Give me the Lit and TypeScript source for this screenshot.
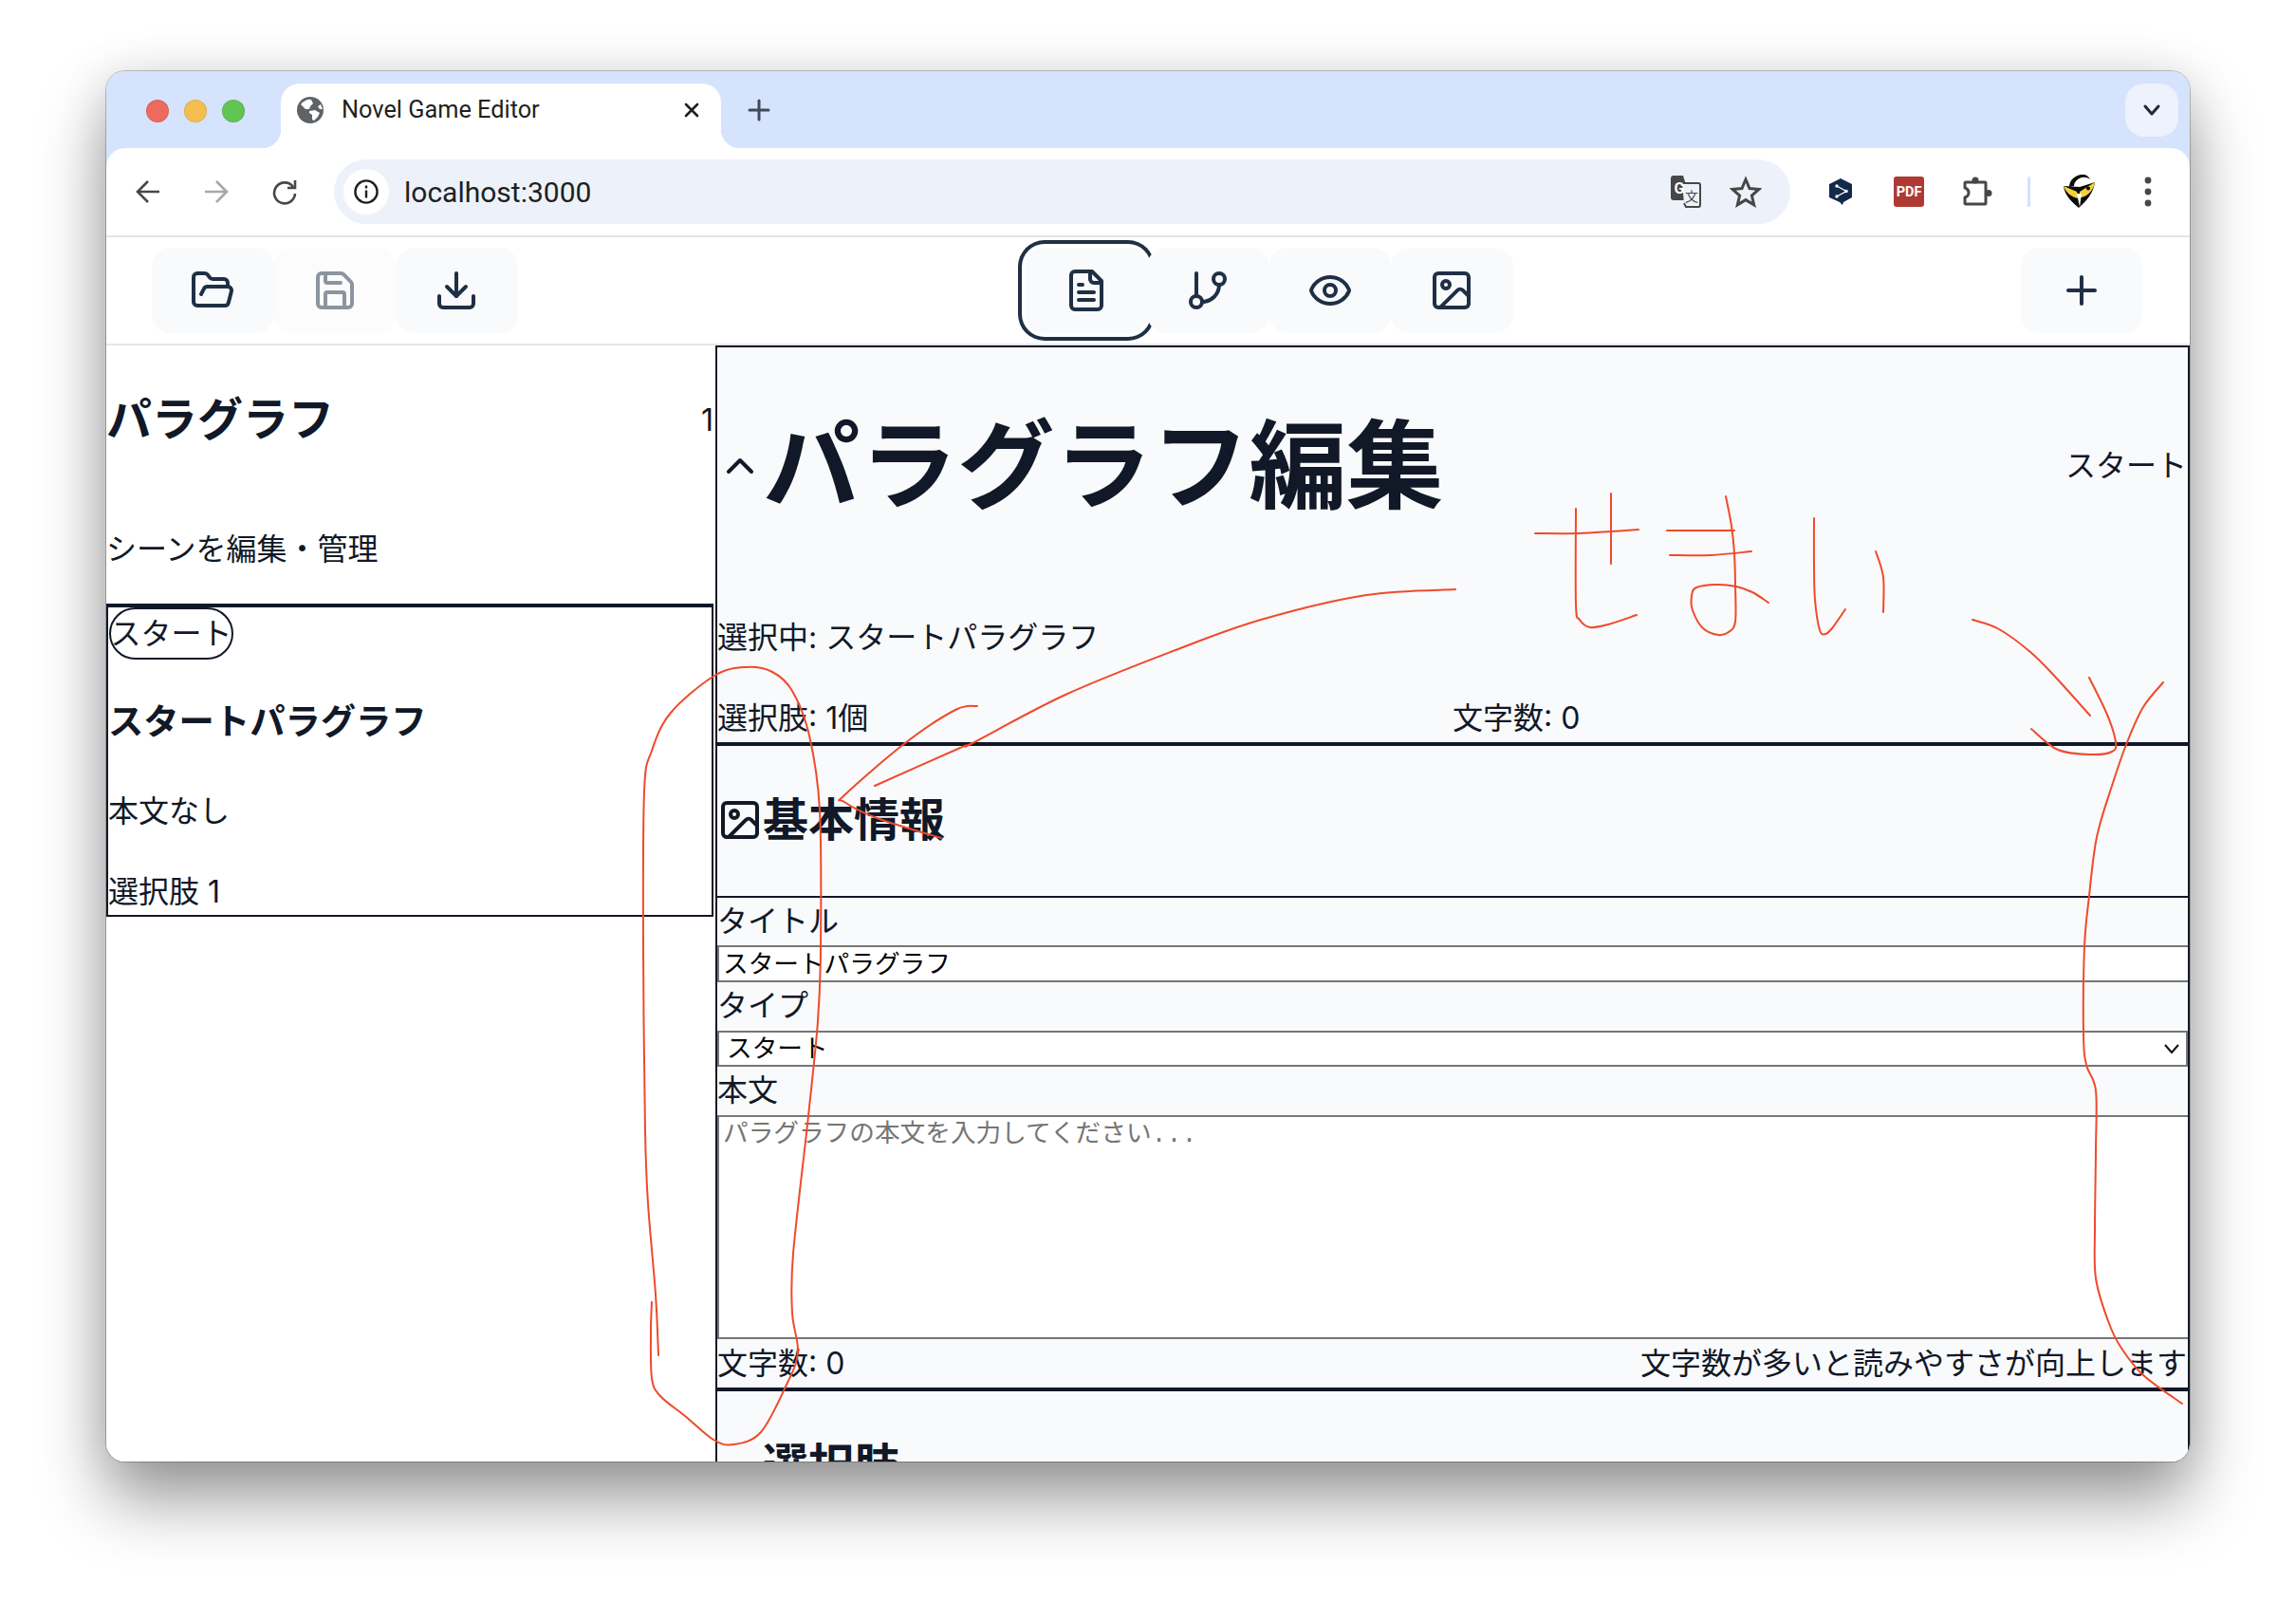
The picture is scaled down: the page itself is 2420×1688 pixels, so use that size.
// app.ts
// Novel game editor inside a browser window, with a red pen annotation on top

import { LitElement, html, css, svg } from "lit";
import { customElement } from "lit/decorators.js";

const icon = (body: unknown, cls = "") => html`
  <svg class="icon ${cls}" viewBox="0 0 24 24" fill="none" stroke="currentColor" stroke-width="2" stroke-linecap="round" stroke-linejoin="round">${body}</svg>
`;

const folderOpen = svg`<path d="m6 14 1.5-2.9A2 2 0 0 1 9.24 10H20a2 2 0 0 1 1.94 2.5l-1.54 6a2 2 0 0 1-1.95 1.5H4a2 2 0 0 1-2-2V5a2 2 0 0 1 2-2h3.9a2 2 0 0 1 1.69.9l.81 1.2a2 2 0 0 0 1.67.9H18a2 2 0 0 1 2 2v2"/>`;
const save = svg`<path d="M15.2 3a2 2 0 0 1 1.4.6l3.8 3.8a2 2 0 0 1 .6 1.4V19a2 2 0 0 1-2 2H5a2 2 0 0 1-2-2V5a2 2 0 0 1 2-2z"/><path d="M17 21v-7a1 1 0 0 0-1-1H8a1 1 0 0 0-1 1v7"/><path d="M7 3v4a1 1 0 0 0 1 1h7"/>`;
const download = svg`<path d="M21 15v4a2 2 0 0 1-2 2H5a2 2 0 0 1-2-2v-4"/><polyline points="7 10 12 15 17 10"/><line x1="12" y1="15" x2="12" y2="3"/>`;
const fileText = svg`<path d="M15 2H6a2 2 0 0 0-2 2v16a2 2 0 0 0 2 2h12a2 2 0 0 0 2-2V7Z"/><path d="M14 2v4a2 2 0 0 0 2 2h4"/><path d="M10 9H8"/><path d="M16 13H8"/><path d="M16 17H8"/>`;
const branch = svg`<line x1="6" y1="3" x2="6" y2="15"/><circle cx="18" cy="6" r="3"/><circle cx="6" cy="18" r="3"/><path d="M18 9a9 9 0 0 1-9 9"/>`;
const eye = svg`<path d="M2.062 12.348a1 1 0 0 1 0-.696 10.75 10.75 0 0 1 19.876 0 1 1 0 0 1 0 .696 10.75 10.75 0 0 1-19.876 0"/><circle cx="12" cy="12" r="3"/>`;
const image = svg`<rect x="3" y="3" width="18" height="18" rx="2"/><circle cx="9" cy="9" r="2"/><path d="m21 15-3.086-3.086a2 2 0 0 0-2.828 0L6 21"/>`;
const plus = svg`<path d="M5 12h14"/><path d="M12 5v14"/>`;
const chevronUp = svg`<path d="m18 15-6-6-6 6"/>`;

// pen strokes in page coordinates, read off the reference
const strokes: number[][][] = [
  [[1534, 621], [1440, 627], [1329, 653], [1239, 685], [1123, 732], [1025, 783], [1012, 788], [922, 828]],
  [[1030, 744], [1007, 748], [954, 783], [891, 837], [890, 845], [927, 863], [992, 883]],
  [[1618, 562], [1663, 562], [1698, 560], [1727, 558]],
  [[1698, 520], [1698, 594]],
  [[1661, 536], [1661, 637], [1665, 653], [1676, 661], [1695, 658], [1725, 648]],
  [[1757, 559], [1828, 559]],
  [[1760, 585], [1803, 585], [1846, 581]],
  [[1819, 523], [1825, 554], [1828, 583], [1829, 616], [1829, 655], [1822, 666], [1811, 669], [1795, 662], [1784, 643], [1783, 628], [1788, 619], [1809, 616], [1830, 618], [1847, 624], [1864, 635]],
  [[1912, 546], [1912, 595], [1913, 632], [1918, 664], [1924, 668], [1931, 662], [1945, 642]],
  [[1977, 581], [1985, 608], [1985, 645]],
  [[2079, 653], [2107, 663], [2140, 687], [2167, 714], [2203, 754]],
  [[2202, 714], [2221, 753], [2230, 782], [2226, 792], [2204, 795], [2169, 790], [2141, 768]],
  [[2280, 719], [2259, 745], [2242, 782], [2226, 828], [2210, 882], [2202, 944], [2197, 998], [2196, 1089], [2199, 1122], [2209, 1149], [2209, 1212], [2208, 1295], [2209, 1347], [2222, 1392], [2235, 1419], [2259, 1449], [2300, 1479]],
  [[694, 1428], [691, 1364], [683, 1268], [680, 1191], [678, 1000], [679, 834], [687, 791], [707, 751], [753, 712], [786, 703], [814, 708], [835, 728], [853, 775], [864, 854], [865, 1000], [862, 1076], [852, 1176], [836, 1321], [835, 1383], [841, 1425], [829, 1459], [802, 1509], [773, 1522], [752, 1517], [722, 1492], [696, 1471], [687, 1452], [686, 1402], [687, 1372]],
];

// catmull-rom through the points, so the pen lines stay round
function smooth(p: number[][]): string {
  let d = `M${p[0][0]} ${p[0][1]}`;
  for (let i = 0; i < p.length - 1; i++) {
    const a = p[Math.max(i - 1, 0)];
    const b = p[i];
    const c = p[i + 1];
    const e = p[Math.min(i + 2, p.length - 1)];
    d += `C${b[0] + (c[0] - a[0]) / 6} ${b[1] + (c[1] - a[1]) / 6} ${c[0] - (e[0] - b[0]) / 6} ${c[1] - (e[1] - b[1]) / 6} ${c[0]} ${c[1]}`;
  }
  return d;
}

@customElement("app-root")
export class AppRoot extends LitElement {
  static styles = css`
    :host {
      display: block;
      position: relative;
      width: 2420px;
      height: 1688px;
      padding: 75px 112px 148px;
      box-sizing: border-box;
      background: #fff;
      font-family: Inter, "Noto Sans CJK JP", sans-serif;
      font-size: 32px;
      line-height: 48px;
      color: #111827;
    }
    .window {
      display: flex;
      flex-direction: column;
      height: 100%;
      border-radius: 20px;
      overflow: hidden;
      background: #d5e3fc;
    }
    .shadow {
      height: 100%;
      border-radius: 20px;
      box-shadow: 0 0 0 1px rgba(0, 0, 0, 0.22), 0 40px 70px rgba(0, 0, 0, 0.4), 0 0 50px rgba(0, 0, 0, 0.1);
    }

    /* tab strip */
    .strip {
      display: flex;
      height: 81px;
      flex: none;
    }
    .lights {
      display: flex;
      gap: 16px;
      padding: 30px 0 0 42px;
      margin-right: 38px;
    }
    .lights i {
      width: 24px;
      height: 24px;
      border-radius: 50%;
      box-sizing: border-box;
      border: 1px solid rgba(0, 0, 0, 0.08);
    }
    .tab {
      position: relative;
      display: flex;
      align-items: center;
      width: 464px;
      height: 68px;
      margin-top: 13px;
      padding: 0 21px 12px 17px;
      box-sizing: border-box;
      background: #fff;
      border-radius: 20px 20px 0 0;
      font-family: Roboto, sans-serif;
      font-size: 25.3px;
      color: #1f1f1f;
    }
    .tab::before,
    .tab::after {
      content: "";
      position: absolute;
      bottom: 0;
      width: 20px;
      height: 20px;
    }
    .tab::before {
      left: -20px;
      background: radial-gradient(circle at 0 0, transparent 20px, #fff 20.5px);
    }
    .tab::after {
      right: -20px;
      background: radial-gradient(circle at 100% 0, transparent 20px, #fff 20.5px);
    }
    .tab .title {
      flex: 1;
      margin-left: 19px;
    }
    .tab svg,
    .strip-plus svg,
    .tabs-menu svg {
      display: block;
    }
    .strip-plus {
      width: 40px;
      margin: 21px 0 0 20px;
      color: #3f4a5a;
    }
    .tabs-menu {
      display: flex;
      align-items: center;
      justify-content: center;
      width: 56px;
      height: 56px;
      margin: 13px 12px 0 auto;
      border-radius: 20px;
      background: #edf2fc;
    }

    /* address bar */
    .bar {
      display: flex;
      align-items: center;
      flex: none;
      height: 92px;
      padding: 0 8px;
      background: #fff;
      border-radius: 20px 20px 0 0;
      border-bottom: 2px solid #e2e3e5;
    }
    .slot {
      display: flex;
      align-items: center;
      justify-content: center;
      flex: none;
      width: 72px;
      height: 48px;
    }
    .pill {
      display: flex;
      align-items: center;
      flex: 1;
      height: 68px;
      margin: 0 17px 0 16px;
      padding: 0 15px 0 10px;
      border-radius: 34px;
      background: #edf2fa;
    }
    .pill .info {
      display: flex;
      align-items: center;
      justify-content: center;
      width: 48px;
      height: 48px;
      border-radius: 50%;
      background: #fff;
    }
    .pill .url {
      flex: 1;
      margin: 2px 0 0 16px;
      font-family: Roboto, sans-serif;
      font-size: 30px;
      color: #1f1f1f;
    }
    .pill .slot {
      width: 64px;
    }
    .sep {
      flex: none;
      width: 36px;
      display: flex;
      justify-content: center;
    }
    .sep i {
      width: 3px;
      height: 32px;
      border-radius: 2px;
      background: #d3e3fd;
    }

    /* editor toolbar */
    .tools {
      display: flex;
      align-items: center;
      justify-content: space-between;
      flex: none;
      height: 112px;
      padding: 0 50px 0 48px;
      background: #fff;
      border-bottom: 2px solid #e5e7eb;
    }
    .group {
      display: flex;
    }
    .btn {
      display: flex;
      align-items: center;
      justify-content: center;
      width: 128.5px;
      height: 90px;
      border-radius: 20px;
      background: #f9fafb;
      color: #1f2f45;
    }
    .btn.disabled .icon {
      opacity: 0.5;
    }
    .btn.disabled {
      background: #fcfcfd;
    }
    .btn.active {
      box-shadow: 0 0 0 4px #fff, 0 0 0 8px #1f2f45;
    }
    .icon {
      width: 48px;
      height: 48px;
      flex: none;
    }

    /* two panes */
    .main {
      display: flex;
      flex: 1;
      min-height: 0;
      background: #fff;
    }
    .list {
      flex: none;
      width: 640px;
      margin-right: 2px;
    }
    .list-head {
      padding: 42px 0 33px;
      border-bottom: 2px solid #111827;
    }
    .list-title {
      display: flex;
      align-items: center;
      justify-content: space-between;
    }
    .list-title h2 {
      margin: 0;
      font-size: 48px;
      line-height: 72px;
      font-weight: 700;
    }
    .list-head p {
      margin: 77px 0 0;
    }
    .count {
      margin-top: 2px;
    }
    .card {
      border: 2px solid #111827;
    }
    .badge {
      display: flex;
      align-items: center;
      justify-content: center;
      width: 131px;
      height: 55px;
      margin-left: 1px;
      border: 2px solid #111827;
      border-radius: 28px;
      box-sizing: border-box;
      white-space: nowrap;
    }
    .card h3 {
      margin: 38px 0 0;
      font-size: 37.3px;
      line-height: 56px;
      font-weight: 700;
    }
    .card .excerpt {
      margin: 42px 0 0;
    }
    .card .choices {
      margin: 37px 0 0;
    }

    .editor {
      flex: 1;
      min-width: 0;
      overflow: hidden;
      background: #f9fafb;
      border: 2px solid #111827;
      border-bottom: none;
    }
    .editor-head {
      display: flex;
      align-items: center;
      justify-content: space-between;
      height: 250px;
    }
    .editor-title {
      display: flex;
      align-items: center;
    }
    .editor-title h1 {
      margin: 0;
      font-size: 102.5px;
      line-height: 144px;
      font-weight: 700;
    }
    .kind {
      margin-right: 1px;
    }
    .selected {
      margin-top: 32px;
    }
    .stats {
      display: grid;
      grid-template-columns: 1fr 1fr;
      margin-top: 37px;
      padding-bottom: 1px;
      border-bottom: 4px solid #111827;
    }
    .section-head {
      display: flex;
      align-items: center;
      padding: 42px 0 44px;
      font-size: 48px;
      line-height: 72px;
      font-weight: 700;
    }
    .section-head .spacer {
      width: 48px;
    }
    .fields {
      border-top: 2px solid #111827;
    }
    .fields label {
      display: block;
      line-height: 49px;
      height: 51px;
    }
    .fields label:first-child {
      height: 50px;
    }
    input,
    select,
    textarea {
      display: block;
      margin: 0;
      box-sizing: border-box;
      border: 2px solid #767676;
      border-radius: 0;
      background: #fff;
      color: #000;
      font-family: Inter, "Noto Sans CJK JP", sans-serif;
      font-size: 26.67px;
      outline: none;
    }
    /* both run past the pane's right edge and get clipped, as in the page */
    input {
      width: calc(100% + 8px);
      height: 39px;
      padding: 0 4px 5px;
    }
    .select-wrap {
      position: relative;
    }
    select {
      width: 100%;
      height: 38px;
      padding: 0 8px 2px;
      appearance: none;
    }
    .select-wrap svg {
      position: absolute;
      right: 9px;
      top: 14px;
      width: 16px;
      height: 10px;
    }
    textarea {
      width: calc(100% + 8px);
      height: 236px;
      padding: 3px 4px;
      resize: none;
      line-height: 32px;
      font-family: "Liberation Mono", "Noto Sans CJK JP", monospace;
    }
    textarea::placeholder {
      color: #757575;
    }
    .hint {
      display: flex;
      justify-content: space-between;
      height: 51px;
      padding-right: 1px;
      line-height: 51px;
      border-bottom: 4px solid #111827;
    }
    .pen {
      position: absolute;
      left: 0;
      top: 0;
      width: 2420px;
      height: 1688px;
      pointer-events: none;
    }
    .pen path {
      fill: none;
      stroke: #ef4a2c;
      stroke-width: 2;
      stroke-linecap: round;
      stroke-linejoin: round;
    }
  `;

  render() {
    return html`
      <div class="shadow">
        <div class="window">
          <div class="strip">
            <div class="lights">
              <i style="background:#ed6a5e"></i>
              <i style="background:#f4bf4f"></i>
              <i style="background:#61c554"></i>
            </div>
            <div class="tab">
              <svg width="28" height="28" viewBox="0 0 28 28">
                <circle cx="14" cy="14" r="14" fill="#5f6368"></circle>
                <path d="M4 8c3-4 8-6 11-5l2 4-3 3-1 3-4 0-3-3zM13 15l6-1 5 3-2 4-4 4-2-1 0-5-3-2zM25 8l2 5-3 0-2-3z" fill="#fff"></path>
              </svg>
              <span class="title">Novel Game Editor</span>
              <svg width="20" height="20" viewBox="0 0 20 20" stroke="#1f1f1f" stroke-width="2.6" stroke-linecap="round"><path d="M4 4l12 12M16 4L4 16"></path></svg>
            </div>
            <div class="strip-plus">
              <svg width="40" height="40" viewBox="0 0 40 40" stroke="currentColor" stroke-width="3" stroke-linecap="round"><path d="M20 10v20M10 20h20"></path></svg>
            </div>
            <div class="tabs-menu">
              <svg width="20" height="14" viewBox="0 0 20 14" fill="none" stroke="#1f2937" stroke-width="3" stroke-linecap="round" stroke-linejoin="round"><path d="M3 3l7 8 7-8"></path></svg>
            </div>
          </div>

          <div class="bar">
            <div class="slot">
              <svg width="28" height="28" viewBox="0 0 28 28" fill="none" stroke="#474747" stroke-width="2.6"><path d="M26 14H4M14 3L3 14l11 11"></path></svg>
            </div>
            <div class="slot">
              <svg width="28" height="28" viewBox="0 0 28 28" fill="none" stroke="#a8a8a8" stroke-width="2.6"><path d="M2 14h22M14 3l11 11-11 11"></path></svg>
            </div>
            <div class="slot">
              <svg width="28" height="28" viewBox="0 0 28 28" fill="none" stroke="#474747" stroke-width="2.6"><path d="M23 9a11 11 0 1 0 2 7"></path><path d="M25 2v8h-8"></path></svg>
            </div>
            <div class="pill">
              <div class="info">
                <svg width="28" height="28" viewBox="0 0 28 28" fill="none" stroke="#1f1f1f" stroke-width="2.4"><circle cx="14" cy="14" r="11.6"></circle><path d="M14 12.5v8M14 7.5v3"></path></svg>
              </div>
              <span class="url">localhost:3000</span>
              <div class="slot">
                <svg width="36" height="36" viewBox="0 0 36 36">
                  <path d="M3 4a3 3 0 0 1 3-3h10l8 26H6a3 3 0 0 1-3-3z" fill="#474747"></path>
                  <path d="M15 9h17a2 2 0 0 1 2 2v21a2 2 0 0 1-2 2H19l-2-4" fill="#edf2fa" stroke="#474747" stroke-width="2"></path>
                  <text x="6.5" y="20" font-family="Roboto, sans-serif" font-size="16" font-weight="700" fill="#fff">G</text>
                  <text x="18" y="28" font-family="'Noto Sans CJK JP', sans-serif" font-size="14" fill="#474747">文</text>
                </svg>
              </div>
              <div class="slot">
                <svg width="34" height="34" viewBox="0 0 34 34" fill="none" stroke="#474747" stroke-width="3" stroke-linejoin="miter"><path d="M17 4l4 9.500 10 .9-7.600 6.600 2.300 9.800L17 25.600 8.300 30.800l2.300-9.800L3 14.400l10-.9z"></path></svg>
              </div>
            </div>
            <div class="slot">
              <svg width="24" height="28" viewBox="0 0 24 28">
                <path d="M12 0l12 6v14l-9 5-1 3-3-3-11-5V6z" fill="#14294a"></path>
                <path d="M8 8l10 5.500L8 19" fill="none" stroke="#fff" stroke-width="1.400"></path>
                <circle cx="8" cy="8" r="1.700" fill="#fff"></circle><circle cx="18" cy="13.500" r="1.700" fill="#fff"></circle><circle cx="8" cy="19" r="1.700" fill="#fff"></circle>
              </svg>
            </div>
            <div class="slot">
              <svg width="32" height="32" viewBox="0 0 32 32">
                <rect width="32" height="32" rx="3" fill="#ad3a34"></rect>
                <text x="16" y="21" text-anchor="middle" font-family="Roboto, sans-serif" font-size="14.500" font-weight="700" fill="#fff">PDF</text>
              </svg>
            </div>
            <div class="slot">
              <svg width="32" height="32" viewBox="0 0 32 32">
                <path d="M4 6H24a1 1 0 0 1 1 1V28a1 1 0 0 1-1 1H4a1 1 0 0 1-1-1V22c3-1 4-3 4-5s-1-4-4-5V7a1 1 0 0 1 1-1z" fill="none" stroke="#474747" stroke-width="3" stroke-linejoin="round"></path>
                <circle cx="14" cy="4" r="3.500" fill="#474747"></circle>
                <circle cx="28" cy="17.500" r="3.500" fill="#474747"></circle>
              </svg>
            </div>
            <div class="sep"><i></i></div>
            <div class="slot">
              <svg width="34" height="36" viewBox="0 0 34 36">
                <path d="M0 12C1 22 9 29 16 35c7-6 16-16 17-27L17 13z" fill="#0a0a0a"></path>
                <path d="M6 13C6 5 14-1 22 0c3 .5 5 3 6 5-4-3-9-3-13 0-3 2-4 5-4 7z" fill="#0a0a0a"></path>
                <path d="M0 12l14 6 2 7C8 24 2 18 0 12zM33 8L17 18v6C25 24 32 16 33 8z" fill="#f4cf3b"></path>
                <path d="M14 20h5l-2 14z" fill="#fff"></path>
                <circle cx="26" cy="14.500" r="2" fill="#0a0a0a"></circle>
              </svg>
            </div>
            <div class="slot">
              <svg width="8" height="32" viewBox="0 0 8 32" fill="#474747"><circle cx="4" cy="4" r="3.400"></circle><circle cx="4" cy="16" r="3.400"></circle><circle cx="4" cy="28" r="3.400"></circle></svg>
            </div>
          </div>

          <div class="tools">
            <div class="group">
              <div class="btn">${icon(folderOpen)}</div>
              <div class="btn disabled">${icon(save)}</div>
              <div class="btn">${icon(download)}</div>
            </div>
            <div class="group">
              <div class="btn active">${icon(fileText)}</div>
              <div class="btn">${icon(branch)}</div>
              <div class="btn">${icon(eye)}</div>
              <div class="btn">${icon(image)}</div>
            </div>
            <div class="group">
              <div class="btn">${icon(plus)}</div>
            </div>
          </div>

          <div class="main">
            <div class="list">
              <div class="list-head">
                <div class="list-title">
                  <h2>パラグラフ</h2>
                  <span class="count">1</span>
                </div>
                <p>シーンを編集・管理</p>
              </div>
              <div class="card">
                <div class="badge">スタート</div>
                <h3>スタートパラグラフ</h3>
                <p class="excerpt">本文なし</p>
                <p class="choices">選択肢 1</p>
              </div>
            </div>

            <div class="editor">
              <div class="editor-head">
                <div class="editor-title">
                  ${icon(chevronUp)}
                  <h1>パラグラフ編集</h1>
                </div>
                <span class="kind">スタート</span>
              </div>
              <div class="selected">選択中: スタートパラグラフ</div>
              <div class="stats">
                <span>選択肢: 1個</span>
                <span>文字数: 0</span>
              </div>

              <div class="section-head">${icon(image)}<span>基本情報</span></div>
              <div class="fields">
                <label>タイトル</label>
                <input value="スタートパラグラフ" />
                <label>タイプ</label>
                <div class="select-wrap">
                  <select><option>スタート</option></select>
                  <svg viewBox="0 0 16 10" fill="none" stroke="#111" stroke-width="2"><path d="M1 1l7 8 7-8"></path></svg>
                </div>
                <label>本文</label>
                <textarea placeholder="パラグラフの本文を入力してください..."></textarea>
                <div class="hint">
                  <span>文字数: 0</span>
                  <span>文字数が多いと読みやすさが向上します</span>
                </div>
              </div>

              <div class="section-head"><span class="spacer"></span><span>選択肢</span></div>
            </div>
          </div>
        </div>
      </div>
      <svg class="pen" viewBox="0 0 2420 1688">
        ${strokes.map((s) => svg`<path d=${smooth(s)}></path>`)}
      </svg>
    `;
  }
}
